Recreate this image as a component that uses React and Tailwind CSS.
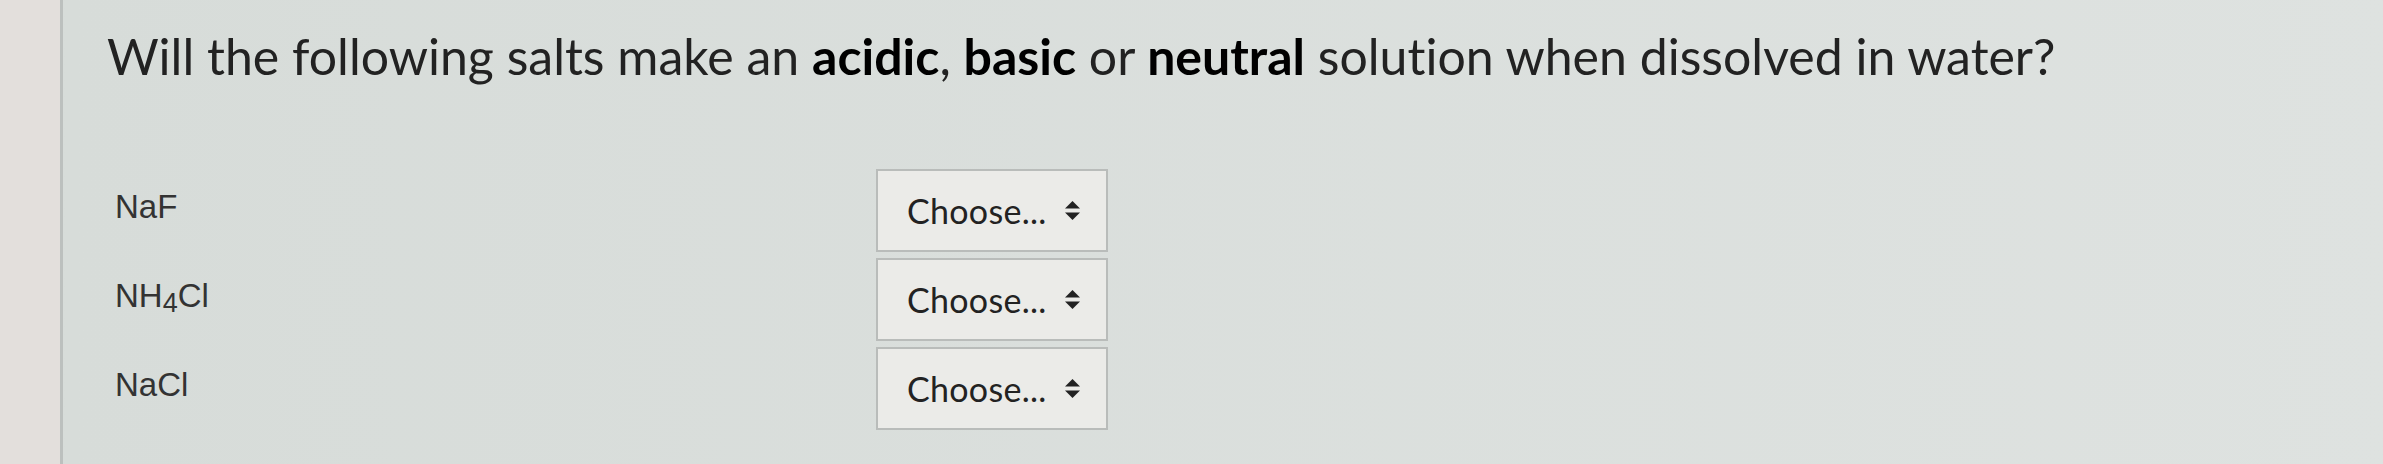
import React from 'react';

const rows = [
  { id: 'naf', label: <>NaF</> },
  { id: 'nh4cl', label: <>NH<sub className="text-[27px] relative top-[5px] align-baseline">4</sub>Cl</> },
  { id: 'nacl', label: <>NaCl</> },
];

function Select() {
  return (
    <div className="w-[232px] h-[83px] border-2 border-[#b9bcba] bg-[#ebebe8] flex items-center pl-[29px] pr-[26px]">
      <span className="text-[34px] text-[#222] font-['Lato',sans-serif] tracking-[0.3px]">Choose...</span>
      <svg className="ml-auto" width="15" height="19" viewBox="0 0 15 19">
        <polygon points="7.5,0 15,7.5 0,7.5" fill="#222" />
        <polygon points="0,11.5 15,11.5 7.5,19" fill="#222" />
      </svg>
    </div>
  );
}

export default function App() {
  return (
    <div className="flex w-[2383px] h-[464px] overflow-hidden">
      <div className="w-[63px] bg-[#e3dfdc] border-r-[3px] border-[#bcc0be]" />
      <div className="flex-1 bg-linear-to-r from-[#d7dcd9] to-[#dee2e0] pl-[44px]">
        <h1 className="mt-[24px] text-[50px] leading-[64px] text-[#222] font-['Lato',sans-serif] [font-variant-ligatures:none]">
          Will the following salts make an <b className="font-bold text-black">acidic</b>, <b className="font-bold text-black">basic</b> or <b className="font-bold text-black">neutral</b> solution when dissolved in water?
        </h1>
        <div className="mt-[81px] flex flex-col gap-[6px]">
          {rows.map((r) => (
            <div key={r.id} className="flex items-center">
              <div className="w-[769px] pl-[8px] -mt-[8px] text-[33px] text-[#333] font-['Liberation_Sans',sans-serif]">
                {r.label}
              </div>
              <Select />
            </div>
          ))}
        </div>
      </div>
    </div>
  );
}
